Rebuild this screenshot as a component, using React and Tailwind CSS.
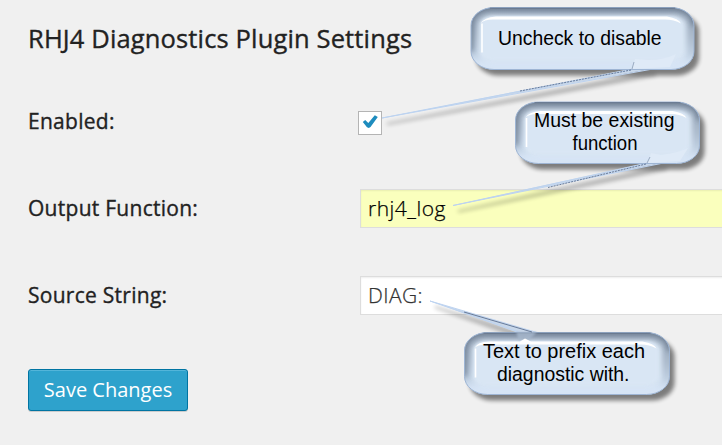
import React from "react";

const CALLOUTS = [
  {
    id: "enabled", x: 471, y: 7.5, w: 223, h: 62,
    tail: "382,118 632,68.5 651,69",
    edge: "M650 69.5 L382 118 L632 69.5", dark: "M631 70 L520 91",
    notch: "M635 59 L649 60 Q664 60 676 54 L670 67 L632 69 Z",
    lines: [{ text: "Uncheck to disable", x: 498, y: 45, width: 163.5 }],
  },
  {
    id: "output", x: 515.5, y: 102, w: 184, h: 61.5,
    tail: "453,205.5 647,162.5 662,163",
    edge: "M661 163.5 L453 205.5 L647 163.5", dark: "M646 164 L548 187.5",
    notch: "M651 153 L661 155 Q678 153 688 148 L680 161 L648 163 Z",
    lines: [
      { text: "Must be existing", x: 534, y: 126.5, width: 140.5 },
      { text: "function", x: 572.5, y: 150, width: 65 },
    ],
  },
  {
    id: "source", x: 464.5, y: 332.5, w: 205, h: 62,
    tail: "430,301 520,333.5 538,333.5",
    edge: "M520 332.5 L430 301 L537 332.5", dark: "M464 312 L532 332",
    notch: "",
    lines: [
      { text: "Text to prefix each", x: 483, y: 358, width: 162 },
      { text: "diagnostic with.", x: 497, y: 381, width: 132.5 },
    ],
  },
];

function Callout({ id, x, y, w, h, tail, edge, dark, notch, lines }) {
  const r = x + w;
  const down = notch !== "";
  const mid = 525;
  return (
    <g>
      <g transform="translate(5 6)" fill="#000" opacity="0.48" filter="url(#soft)">
        <rect x={x} y={y} width={w} height={h} rx="23" ry="18" />
      </g>
      <polygon points={tail} transform="translate(5 6)" fill="#000" stroke="#000" strokeWidth="2" opacity="0.27" filter="url(#soft)" />
      <polygon points={tail} fill="#c8d7e9" />
      <path d={edge} fill="none" stroke="#bdd3f0" strokeWidth="1" />
      <clipPath id={`clip-${id}`}>
        <rect x={x} y={y} width={w} height={h} rx="23" ry="18" />
      </clipPath>
      <rect x={x} y={y} width={w} height={h} rx="23" ry="18" fill="#d9e6f4" />
      <g clipPath={`url(#clip-${id})`}>
        <rect x={x - 1} y={y - 1} width={w + 2} height={h + 2} rx="23" ry="18" fill="none" stroke="url(#rim)" strokeWidth="17" filter="url(#bevel)" />
        <path d={`M${x} ${y + h - 18} V${y + 18} Q${x} ${y} ${x + 23} ${y} H${r - 23} Q${r} ${y} ${r} ${y + 18}`} fill="none" stroke="#4f5f74" strokeWidth="4" opacity="0.7" filter="url(#bevel)" />
        <rect x={x + 10} y={y + 9} width={w - 22} height={h - 19} rx="12" ry="8" fill="#d9e6f4" filter="url(#edge)" />
        {down && <path d={notch} fill="#dfeaf7" />}
      </g>
      <rect x={x} y={y} width={w} height={h} rx="23" ry="18" fill="none" stroke="#9eb5d4" strokeWidth="1" />
      <path d={`M${x + 19} ${y + 0.7} H${r - 19}`} fill="none" stroke="#64748c" strokeWidth="1" />
      {down ? (
        <path d={`M${x + 9.5} ${y + 16} Q${x + 13} ${y + 10} ${x + 25} ${y + 9} H${r - 27} Q${r - 15} ${y + 11} ${r - 13} ${y + 16} Q${r - 20} ${y + 12} ${r - 29} ${y + 12} H${x + 22} Q${x + 13} ${y + 12} ${x + 9.5} ${y + 16} Z`} fill="white" />
      ) : (
        <>
          <path d="M516 332 L537 332 L528 341 L524 338 L519 341 Z" fill="#a7b8cd" opacity="0.8" filter="url(#edge)" />
          <path d={`M${x + 9.5} ${y + 16} Q${x + 13} ${y + 9} ${x + 25} ${y + 9} H${mid - 5} L${mid} ${y + 6} L${mid + 6} ${y + 9} H${r - 27} Q${r - 15} ${y + 11} ${r - 13} ${y + 16} Q${r - 20} ${y + 12} ${r - 29} ${y + 12} H${x + 22} Q${x + 13} ${y + 12} ${x + 9.5} ${y + 16} Z`} fill="white" />
        </>
      )}
      <path d={`M${x + 11} ${y + 16} V${y + 45}`} stroke="white" strokeWidth="1.6" />
      <path d={dark} stroke="#5d7190" strokeWidth="0.9" strokeDasharray={down ? "2 1" : undefined} />
      {down && <path d={id === "enabled" ? "M634 62 L632 69" : "M650 157 L647 163"} stroke="#9aabc1" strokeWidth="1" />}
      {lines.map((l) => (
        <text key={l.text} x={l.x} y={l.y} textLength={l.width} lengthAdjust="spacingAndGlyphs" fill="black" className="font-['Liberation_Sans',Arial,sans-serif] text-[20px]">
          {l.text}
        </text>
      ))}
    </g>
  );
}

function Row({ label, children }) {
  return (
    <div className="flex h-[87px] items-center">
      <label className="w-[332px] shrink-0 pb-[2px] text-[21px] leading-7 font-medium tracking-[0.27px] whitespace-nowrap [-webkit-text-stroke:0.35px_#222]">{label}</label>
      {children}
    </div>
  );
}

export default function App() {
  return (
    <div className="relative h-[445px] w-[722px] overflow-hidden bg-[#f0f0f0] font-['Open_Sans',sans-serif] text-[#222]">
      <main className="flex flex-col items-start pl-7">
        <h1 className="mt-5 text-[25.5px] leading-9 font-medium tracking-[0.14px] whitespace-nowrap [-webkit-text-stroke:0.35px_#222]">RHJ4 Diagnostics Plugin Settings</h1>
        <form className="mt-[22px] w-[694px]">
          <Row label="Enabled:">
            <span className="mt-[2px] -ml-[2px] flex size-6 shrink-0 items-center justify-center border border-[#b4b4b4] bg-white">
              <svg width="22" height="22" viewBox="0 0 22 22">
                <path d="M3.8 10 L6.2 8 L9.3 11 L15.8 3.2 L18.8 5 L11.5 15 L9.8 16 L8 15.2 Z" fill="#1e8cbe" />
              </svg>
            </span>
          </Row>
          <Row label="Output Function:">
            <div className="flex h-[39px] w-[380px] shrink-0 items-center border border-[#ddd] bg-[#faffbd] pl-[7px] text-[21px] font-light tracking-[0.5px] text-black shadow-[inset_0_1px_2px_rgba(0,0,0,0.07)] [-webkit-text-stroke:0.25px_#000]">rhj4_log</div>
          </Row>
          <Row label="Source String:">
            <div className="flex h-[39px] w-[380px] shrink-0 items-center border border-[#ddd] bg-white pl-[7px] text-[21px] font-light tracking-[0.4px] text-[#333] shadow-[inset_0_1px_2px_rgba(0,0,0,0.07)] [-webkit-text-stroke:0.25px_#333]">DIAG:</div>
          </Row>
        </form>
        <button type="button" className="mt-[30px] flex h-[42px] w-40 items-center justify-center rounded-[3px] border border-[#0074a2] bg-[#2ea2cc] text-[20px] whitespace-nowrap text-white shadow-[inset_0_1px_0_rgba(120,200,230,0.5),0_1px_0_rgba(0,0,0,0.15)]">Save Changes</button>
      </main>
      <svg className="pointer-events-none absolute inset-0" width="722" height="445" viewBox="0 0 722 445">
        <defs>
          <filter id="soft" colorInterpolationFilters="sRGB" filterUnits="userSpaceOnUse" x="0" y="0" width="722" height="445"><feGaussianBlur stdDeviation="2.2" /></filter>
          <filter id="bevel" colorInterpolationFilters="sRGB" filterUnits="userSpaceOnUse" x="0" y="0" width="722" height="445"><feGaussianBlur stdDeviation="2.5" /></filter>
          <filter id="edge" colorInterpolationFilters="sRGB" filterUnits="userSpaceOnUse" x="0" y="0" width="722" height="445"><feGaussianBlur stdDeviation="0.8" /></filter>
          <linearGradient id="rim" x1="0" y1="0" x2="0" y2="1">
            <stop offset="0" stopColor="#909fb2" />
            <stop offset="0.5" stopColor="#adbccd" />
            <stop offset="0.75" stopColor="#bfcfe1" />
            <stop offset="0.88" stopColor="#d6e4f5" />
            <stop offset="1" stopColor="#d6e4f5" />
          </linearGradient>
        </defs>
        {CALLOUTS.map((c) => <Callout key={c.id} {...c} />)}
      </svg>
    </div>
  );
}
